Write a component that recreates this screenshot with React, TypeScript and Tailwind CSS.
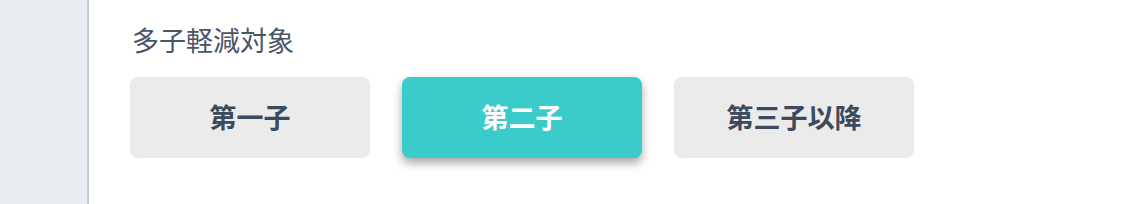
import React from "react";

const font = { fontFamily: '"Noto Sans CJK JP", "Noto Sans", sans-serif' };

export default function App() {
  const opts = ["第一子", "第二子", "第三子以降"];
  const active = 1;
  return (
    <div className="flex w-[1129px] h-[204px] bg-white" style={font}>
      <div className="w-[89px] h-full bg-[#e9ecf0] border-r-2 border-[#c5ccd3]" />
      <div className="flex-1 pl-[41px] pt-[21px]">
        <div className="text-[27px] leading-[38px] text-[#4a5566] pl-[2px]">多子軽減対象</div>
        <div className="flex gap-[32px] mt-[18px]">
          {opts.map((o, i) => (
            <button
              key={o}
              className={
                i === active
                  ? "w-[240px] h-[81px] rounded-[8px] bg-[#3ccbcb] text-white text-[27px] font-bold shadow-[0_5px_10px_rgba(0,0,0,0.35)]"
                  : "w-[240px] h-[81px] rounded-[8px] bg-[#ebebeb] text-[#3c4a5e] text-[27px] font-bold"
              }
            >
              {o}
            </button>
          ))}
        </div>
      </div>
    </div>
  );
}
